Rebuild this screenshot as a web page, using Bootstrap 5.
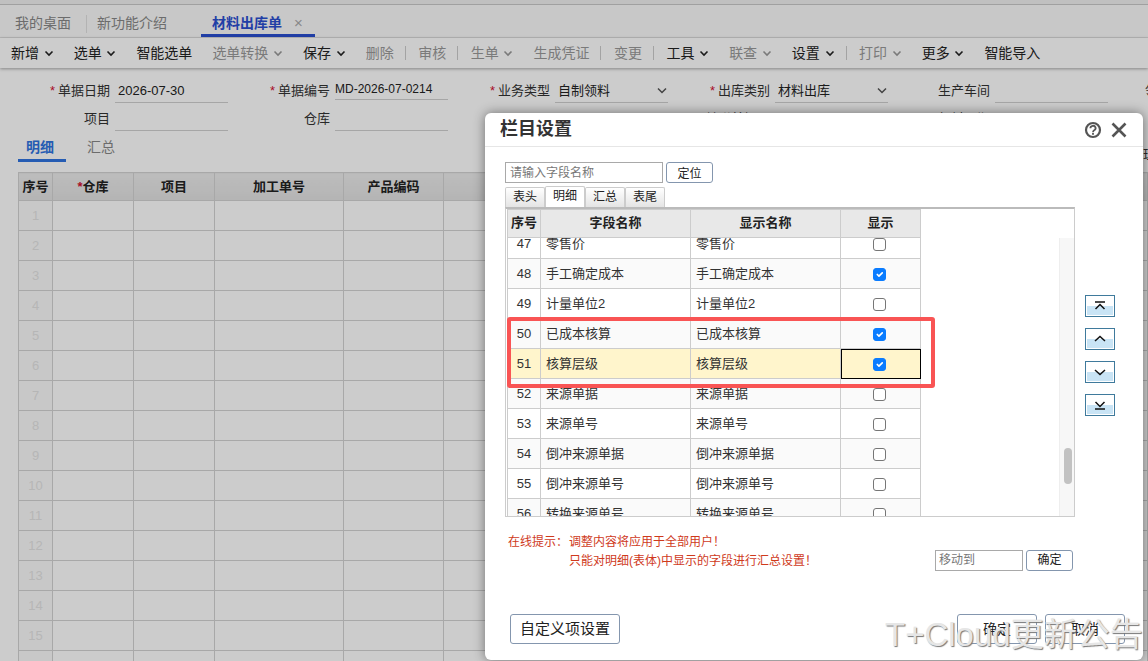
<!DOCTYPE html>
<html lang="zh-CN">
<head>
	<meta charset="UTF-8" />
	<meta name="viewport" content="width=device-width, initial-scale=1.0"/>
	<title>材料出库单</title>

	<!-- Bootstrap CSS -->
	<link href="https://cdn.jsdelivr.net/npm/bootstrap@5.3.0/dist/css/bootstrap.min.css" rel="stylesheet" />

	<!-- Bootstrap JS bundle -->
	<script src="https://cdn.jsdelivr.net/npm/bootstrap@5.3.0/dist/js/bootstrap.bundle.min.js"></script>

	<style>
		html, body { height: 100%; }
		body {
			font-family: "Liberation Sans", "Noto Sans CJK SC", sans-serif;
			font-size: 13px;
			color: #222;
			background: #fff;
			overflow: hidden;
			position: relative;
			width: 1148px;
			height: 661px;
		}

		/* page behind the dialog */
		.top-strip { height: 5px; border-bottom: 1px solid #c8c8c8; background: #f0f0f0; }
		.tab-bar { height: 33px; background: #fafafa; border-bottom: 1px solid #e4e4e4; font-size: 14px; color: #888; }
		.tab-item { padding: 0 15px; height: 32px; line-height: 36px; }
		.tab-second { width: 114px; padding-left: 10px; }
		.tab-sep { width: 1px; height: 18px; background: #e0e0e0; margin-top: 10px; }
		.tab-active { color: #2a4fd0; font-weight: bold; width: 114px; padding-left: 11px; border-bottom: 3px solid #2a4fd0; white-space: nowrap; }
		.tab-x { color: #aaa; font-weight: normal; margin-left: 12px; font-size: 15px; }

		.tool-bar { height: 30px; padding-left: 11px; background: #fff; font-size: 14px; color: #222; box-shadow: 0 1px 3px rgba(0,0,0,.35); white-space: nowrap; position: relative; }
		.tool-item { display: flex; align-items: center; margin-right: 20px; }
		.tool-item svg { margin-left: 4.7px; margin-top: 1px; }
		.tool-off { color: #999; }
		.tool-sep { width: 1px; height: 14px; background: #ccc; margin: 0 12.5px 0 -9px; }

		.form-area { padding: 11px 0 0 8px; height: 61px; }
		.form-line { height: 28px; white-space: nowrap; }
		.field-box { width: 220px; flex: none; display: flex; }
		.field-label { width: 102px; text-align: right; line-height: 24px; color: #333; }
		.field-label i { color: #d3102f; font-style: normal; margin-right: 3px; }
		.field-value { width: 113px; margin-left: 5px; height: 24px; line-height: 24px; padding-left: 3px; border-bottom: 1px solid #d0d0d0; display: flex; justify-content: space-between; align-items: center; color: #222; }
		.field-short { height: 21px; line-height: 19px; font-size: 12px; padding-left: 0; }
		.field-cut { padding-left: 37px; width: auto; }

		.sub-tabs { padding-left: 18px; height: 33px; font-size: 14px; color: #888; overflow: hidden; }
		.sub-tab { width: 69px; line-height: 36px; }
		.sub-on { width: 48px; margin-right: 21px; padding-left: 8px; height: 33px; line-height: 36px; color: #2f74e0; font-weight: bold; border-bottom: 3px solid #2f74e0; }
		.sub-edge { margin-left: auto; margin-right: -8px; font-size: 13px; color: #333; line-height: 52px; }

		.grid-wrap { margin-left: 18px; margin-top: 10px; overflow: hidden; }
		.bill-grid { border-collapse: collapse; table-layout: fixed; width: 1130px; }
		.bill-grid th, .bill-grid td { border: 1px solid #d2d2d2; padding: 0; text-align: center; }
		.bill-grid th { height: 28px; font-size: 13px; color: #222; background: linear-gradient(#ececec, #e2e2e2); }
		.bill-grid td { height: 30px; font-size: 13px; color: #e4e4e4; }
		.bill-grid td:first-child { background: #fbfbfb; }
		.bill-grid th i { color: #d3102f; font-style: normal; }
		.w-no { width: 34px; }
		.w-store { width: 81px; }
		.w-code { width: 129px; }
		.w-prod { width: 100px; }

		.dim-layer { position: absolute; inset: 0; background: rgba(0,0,0,.2); }

		/* dialog */
		.set-dialog { position: absolute; left: 485px; top: 113px; width: 658px; height: 547px; background: #fff; border-radius: 6px; box-shadow: 0 0 12px rgba(0,0,0,.45); }
		.set-head { height: 34px; border-bottom: 1px solid #e6e6e6; padding: 0 15px; font-size: 18px; font-weight: bold; color: #333; flex: none; }
		.set-body { padding: 15px 20px 0 20px; position: relative; }
		.search-input { width: 158px; height: 21px; border: 1px solid #a9a9a9; padding: 0 4px; font-size: 12px; line-height: 20px; color: #777; }
		.plain-btn { border: 1px solid #8496ae; border-radius: 3px; background: #fff; font-size: 12px; color: #222; padding: 0; height: 21px; line-height: 19px; }
		.find-btn { width: 47px; margin-left: 3px; padding-top: 2px; }
		.set-tabs { height: 21px; margin-top: 3px; }
		.set-tab { width: 40px; height: 20px; margin-top: 1px; text-align: center; font-size: 12px; line-height: 18px; border: 1px solid #ccc; border-bottom: 0; border-radius: 2px 2px 0 0; background: linear-gradient(#fff, #e4e4e4); color: #222; }
		.set-tab-on { background: #fff; height: 21px; margin-top: 0; }

		.field-frame { width: 570px; height: 310px; border: 1px solid #ccc; border-top: 2px solid #bbb; position: relative; background: #fff; overflow: hidden; flex: none; }
		.field-scroll { position: absolute; top: 29px; left: 0; right: 0; bottom: 0; overflow: hidden; }
		.field-tbl { border-collapse: collapse; table-layout: fixed; width: 414px; margin-left: 1px; }
		.field-tbl th, .field-tbl td { border: 1px solid #ccc; padding: 1px 0 0 5px; font-size: 13px; color: #333; }
		.field-tbl th { height: 28px; background: #e8e8e8; text-align: center; font-weight: bold; color: #222; padding: 0 0 2px 0; }
		.field-tbl td { height: 30px; }
		.field-tbl td.num-cell { padding: 1px 0 0 0; text-align: center; }
		.field-tbl td.chk-cell { padding: 0; text-align: center; }
		.field-tbl tr.odd-row td { background: #fafafa; }
		.field-tbl tr.cur-row td { background: #fff5cc; }
		.field-tbl tr.cur-row td.chk-cell { outline: 1px solid #000; outline-offset: -1px; }
		.field-tbl .form-check-input { width: 13px; height: 13px; margin: 0 2px 0 0; border: 1px solid #767676; border-radius: 3px; vertical-align: -3px; opacity: 1; }
		.field-tbl .form-check-input:checked { background-color: #0a7cff; border-color: #0a7cff; }
		.w-num { width: 33px; }
		.w-name { width: 150px; }
		.w-show { width: 80px; }
		.scroll-track { position: absolute; right: 0; top: 29px; bottom: 0; width: 15px; background: #f7f7f7; border-left: 1px solid #eee; }
		.scroll-thumb { position: absolute; top: 210px; left: 4px; width: 8px; height: 36px; border-radius: 4px; background: #c2c2c2; }

		.move-col { width: 30px; margin-left: 10px; padding-top: 88px; gap: 11px; }
		.move-btn { width: 30px; height: 22px; padding: 0; border: 1px solid #3f7a9c; box-shadow: inset 0 0 0 1px #fff; background: linear-gradient(#fff 0, #fff 50%, #c9e4f5 50%, #c9e4f5 100%); display: flex; align-items: center; justify-content: center; }

		.mark-box { position: absolute; left: 22px; top: 170px; width: 428px; height: 71px; border: 4px solid #f95454; border-radius: 3px; pointer-events: none; }

		.hint-row { padding-top: 16px; position: relative; font-size: 12px; color: #cf3a1c; }
		.hint-line { height: 19px; line-height: 19px; white-space: nowrap; }
		.hint-tag { width: 64px; flex: none; padding-left: 3px; }
		.move-to { position: absolute; right: 50px; top: 33px; }
		.move-input { width: 88px; height: 21px; border: 1px solid #a9a9a9; padding: 0 3px; font-size: 12px; line-height: 19px; color: #777; }
		.ok-small { width: 47px; margin-left: 3px; }

		.set-foot { margin-top: auto; padding: 0 18px 16px 25px; }
		.foot-btn { height: 30px; width: 80px; font-size: 14px; line-height: 28px; border-radius: 3px; }
		.foot-wide { width: 110px; font-size: 15px; }

		.notice-mark { position: absolute; left: 885px; top: 613px; font-size: 33px; line-height: 44px; color: #e6e6e6; text-shadow: 1px 1px 1px #777; white-space: nowrap; }
	</style>
</head>

<body>
	<div class="top-strip"></div>

	<div class="tab-bar d-flex">
		<div class="tab-item">我的桌面</div>
		<div class="tab-sep"></div>
		<div class="tab-item tab-second">新功能介绍</div>
		<div class="tab-active tab-item">材料出库单<span class="tab-x">×</span></div>
	</div>

	<div class="tool-bar d-flex align-items-center" id="toolBar"></div>

	<div class="form-area">
		<div class="form-line d-flex">
			<div class="field-box"><div class="field-label"><i>*</i>单据日期</div><div class="field-value">2026-07-30</div></div>
			<div class="field-box"><div class="field-label"><i>*</i>单据编号</div><div class="field-value field-short">MD-2026-07-0214</div></div>
			<div class="field-box"><div class="field-label"><i>*</i>业务类型</div><div class="field-value">自制领料<svg width="12" height="8" viewBox="0 0 12 8"><path d="M2 1.5 6 5.5 10 1.5" fill="none" stroke="#555" stroke-width="1.5"/></svg></div></div>
			<div class="field-box"><div class="field-label"><i>*</i>出库类别</div><div class="field-value">材料出库<svg width="12" height="8" viewBox="0 0 12 8"><path d="M2 1.5 6 5.5 10 1.5" fill="none" stroke="#555" stroke-width="1.5"/></svg></div></div>
			<div class="field-box"><div class="field-label">生产车间</div><div class="field-value"></div></div>
			<div class="field-box"><div class="field-label field-cut">领料部门</div></div>
		</div>
		<div class="form-line d-flex">
			<div class="field-box"><div class="field-label">项目</div><div class="field-value"></div></div>
			<div class="field-box"><div class="field-label">仓库</div><div class="field-value"></div></div>
			<div class="field-box"></div>
			<div class="field-box"><div class="field-label">关联单据号</div></div>
			<div class="field-box"><div class="field-label">领料日期</div></div>
		</div>
	</div>

	<div class="sub-tabs d-flex">
		<div class="sub-on">明细</div>
		<div class="sub-tab">汇总</div>
		<div class="sub-edge">理</div>
	</div>

	<div class="grid-wrap">
		<table class="bill-grid">
			<colgroup><col class="w-no"><col class="w-store"><col class="w-store"><col class="w-code"><col class="w-prod"><col></colgroup>
			<thead><tr><th>序号</th><th><i>*</i>仓库</th><th>项目</th><th>加工单号</th><th>产品编码</th><th></th></tr></thead>
			<tbody id="billRows"></tbody>
		</table>
	</div>

	<div class="dim-layer"></div>

	<div class="set-dialog d-flex flex-column">
		<div class="set-head d-flex align-items-center justify-content-between">
			<span>栏目设置</span>
			<span class="d-flex align-items-center gap-2">
				<svg width="18" height="18" viewBox="0 0 18 18"><circle cx="9" cy="9" r="7" fill="none" stroke="#555" stroke-width="2.2"/><path d="M6.4 7.2a2.6 2.4 0 1 1 3.8 2.1c-.8.5-1.2.9-1.2 1.9" fill="none" stroke="#555" stroke-width="1.8"/><rect x="8.1" y="12" width="1.8" height="1.8" fill="#555"/></svg>
				<svg width="18" height="18" viewBox="0 0 18 18"><path d="M2.5 2.5 15.5 15.5M15.5 2.5 2.5 15.5" fill="none" stroke="#555" stroke-width="2.6"/></svg>
			</span>
		</div>

		<div class="set-body">
			<div class="d-flex">
				<div class="search-input">请输入字段名称</div>
				<button class="plain-btn find-btn">定位</button>
			</div>
			<div class="set-tabs d-flex">
				<div class="set-tab">表头</div>
				<div class="set-tab set-tab-on">明细</div>
				<div class="set-tab">汇总</div>
				<div class="set-tab">表尾</div>
			</div>

			<div class="d-flex">
				<div class="field-frame">
					<table class="field-tbl">
						<colgroup><col class="w-num"><col class="w-name"><col class="w-name"><col class="w-show"></colgroup>
						<thead><tr><th>序号</th><th>字段名称</th><th>显示名称</th><th>显示</th></tr></thead>
					</table>
					<div class="field-scroll" id="fieldScroll">
						<table class="field-tbl">
							<colgroup><col class="w-num"><col class="w-name"><col class="w-name"><col class="w-show"></colgroup>
							<tbody id="fieldRows"></tbody>
						</table>
					</div>
					<div class="scroll-track"><div class="scroll-thumb"></div></div>
				</div>

				<div class="move-col d-flex flex-column">
					<button class="move-btn"><svg width="16" height="10" viewBox="0 0 16 10"><path d="M3 1H13M3.5 8 8 3.5 12.500 8" fill="none" stroke="#111" stroke-width="1.5"/></svg></button>
					<button class="move-btn"><svg width="16" height="10" viewBox="0 0 16 10"><path d="M3 7 8 2.500 13 7" fill="none" stroke="#111" stroke-width="1.5"/></svg></button>
					<button class="move-btn"><svg width="16" height="10" viewBox="0 0 16 10"><path d="M3 3 8 7.500 13 3" fill="none" stroke="#111" stroke-width="1.5"/></svg></button>
					<button class="move-btn"><svg width="16" height="10" viewBox="0 0 16 10"><path d="M3.500 2 8 6.500 12.500 2M3 9H13" fill="none" stroke="#111" stroke-width="1.5"/></svg></button>
				</div>
			</div>

			<div class="mark-box"></div>

			<div class="hint-row">
				<div class="hint-line d-flex"><span class="hint-tag">在线提示：</span><span>调整内容将应用于全部用户！</span></div>
				<div class="hint-line d-flex"><span class="hint-tag"></span><span>只能对明细(表体)中显示的字段进行汇总设置！</span></div>
				<div class="move-to d-flex">
					<div class="move-input">移动到</div>
					<button class="plain-btn ok-small">确定</button>
				</div>
			</div>
		</div>

		<div class="set-foot d-flex justify-content-between">
			<button class="plain-btn foot-btn foot-wide">自定义项设置</button>
			<div class="d-flex gap-2">
				<button class="plain-btn foot-btn">确定</button>
				<button class="plain-btn foot-btn">取消</button>
			</div>
		</div>
	</div>

	<div class="notice-mark">T+Cloud更新公告</div>

	<script>
		// toolbar: [text, has chevron, disabled, separator after]
		const tools = [
			['新增', 1, 0, 0], ['选单', 1, 0, 0], ['智能选单', 0, 0, 0], ['选单转换', 1, 1, 0], ['保存', 1, 0, 0],
			['删除', 0, 1, 1], ['审核', 0, 1, 1], ['生单', 1, 1, 0], ['生成凭证', 0, 1, 1], ['变更', 0, 1, 1],
			['工具', 1, 0, 0], ['联查', 1, 1, 0], ['设置', 1, 0, 1], ['打印', 1, 1, 0], ['更多', 1, 0, 0], ['智能导入', 0, 0, 0]
		];
		document.getElementById('toolBar').innerHTML = tools.map(([text, chev, off, sep]) => {
			const arrow = chev ? `<svg width="10" height="7" viewBox="0 0 10 7"><path d="M1.5 1.5 5 5 8.5 1.5" fill="none" stroke="currentColor" stroke-width="1.6"/></svg>` : '';
			return `<div class="tool-item ${off ? 'tool-off' : ''}">${text}${arrow}</div>` + (sep ? '<div class="tool-sep"></div>' : '');
		}).join('');

		// background bill rows
		let billHtml = '';
		for (let i = 1; i <= 16; i++) {
			billHtml += `<tr><td>${i}</td><td></td><td></td><td></td><td></td><td></td></tr>`;
		}
		document.getElementById('billRows').innerHTML = billHtml;

		// field rows shown in the dialog
		const fields = [
			[47, '零售价', 0], [48, '手工确定成本', 1], [49, '计量单位2', 0], [50, '已成本核算', 1], [51, '核算层级', 1],
			[52, '来源单据', 0], [53, '来源单号', 0], [54, '倒冲来源单据', 0], [55, '倒冲来源单号', 0], [56, '转换来源单号', 0]
		];
		document.getElementById('fieldRows').innerHTML = fields.map(([no, name, on]) => {
			const cls = no === 51 ? 'cur-row' : (no % 2 === 0 ? 'odd-row' : '');
			return `<tr class="${cls}"><td class="num-cell">${no}</td><td>${name}</td><td>${name}</td>
				<td class="chk-cell"><input class="form-check-input" type="checkbox" ${on ? 'checked' : ''}></td></tr>`;
		}).join('');
		document.getElementById('fieldScroll').scrollTop = 10;
	</script>
</body>
</html>
